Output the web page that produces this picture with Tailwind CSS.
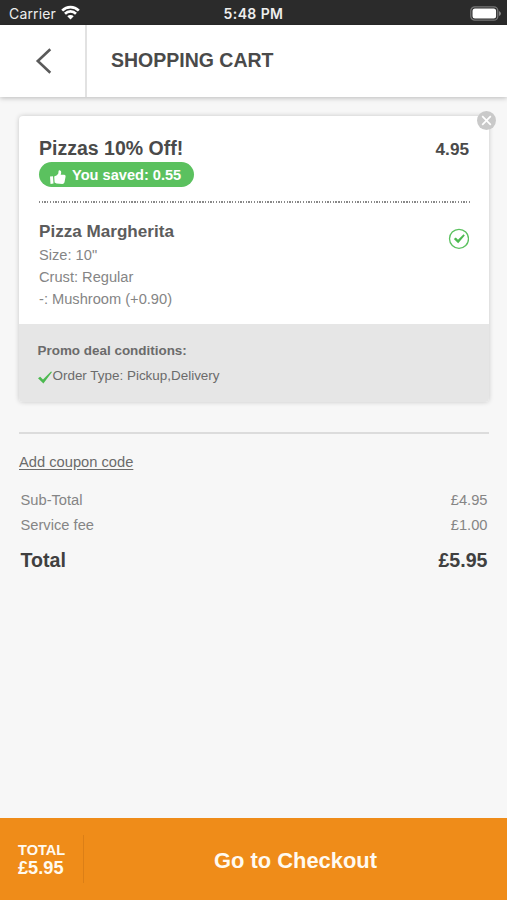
<!DOCTYPE html>
<html lang="en">
<head>
<meta charset="utf-8">
<title>Shopping Cart</title>
<script src="https://cdn.jsdelivr.net/npm/@tailwindcss/browser@4"></script>
</head>
<body class="bg-[#f7f7f7]">
<div class="flex h-[900px] w-[507px] flex-col overflow-hidden bg-[#f7f7f7] font-['Liberation_Sans',Arial,sans-serif] whitespace-nowrap text-[#4a4a4a]">
  <!-- Status bar -->
  <div class="grid h-[25px] shrink-0 grid-cols-3 items-center bg-[#2b2b2b] pt-[2px] font-[Inter,sans-serif] text-[#eeeeee]">
    <div class="flex items-center gap-[5px] pl-[9px]">
      <span class="text-[14px] leading-[20px] tracking-[0.15px]">Carrier</span>
      <svg class="mb-[2px] h-[15px] w-[19px]" viewBox="0 0 19 15" fill="none" stroke="#fff" stroke-width="2.700"><path d="M1.200 5.600a11.800 11.800 0 0 1 16.600 0"/><path d="M4 8.700a7.800 7.800 0 0 1 11 0"/><path d="M9.500 14.400L6.300 11.200a4.600 4.600 0 0 1 6.400 0z" fill="#fff" stroke="none"/></svg>
    </div>
    <div class="text-center text-[14px] leading-[20px] font-semibold tracking-[0.400px]">5:48 PM</div>
    <div class="flex justify-end pr-[6px]">
      <svg class="mb-px h-[15px] w-[31px]" viewBox="0 0 31 15"><rect x=".8" y=".8" width="27" height="13.400" rx="4" fill="none" stroke="#777" stroke-width="1.300"/><rect x="2.500" y="2.500" width="23.600" height="10" rx="2.500" fill="#fff"/><path d="M29 5v5q2-1 2-2.500T29 5z" fill="#888"/></svg>
    </div>
  </div>

  <!-- Header -->
  <header class="z-10 flex h-[72px] shrink-0 bg-white shadow-[0_1px_5px_rgba(0,0,0,0.25)]">
    <div class="flex w-[87px] items-center border-r-2 border-[#e2e2e2] pl-[35px]">
      <svg class="h-[26px] w-[17px]" viewBox="0 0 17 26" fill="none" stroke="#5a5a5a" stroke-width="2.600"><path d="M15.300 1.300L2.800 13L15.300 24.700"/></svg>
    </div>
    <h1 class="pl-[24px] text-[19.500px] leading-[70px] font-bold">SHOPPING CART</h1>
  </header>

  <main class="flex-1 px-[19px] pt-[19px]">
    <!-- Deal card -->
    <section class="relative h-[286px] w-[470px] rounded-[4px] bg-white shadow-[0_0_5px_rgba(0,0,0,0.2)]">
      <button class="absolute -top-[5px] -right-[7px] size-[19px] rounded-full bg-[#c9c9c9]" aria-label="Remove">
        <svg class="size-[19px]" viewBox="0 0 19 19" stroke="#fff" stroke-width="1.700"><path d="M5.200 5.200L13.800 13.800M13.800 5.200L5.200 13.800"/></svg>
      </button>
      <div class="h-[208px] px-[20px] pt-[20px]">
        <div class="flex h-[27px] justify-between font-bold">
          <h2 class="text-[19.500px] leading-[25px]">Pizzas 10% Off!</h2>
          <span class="text-[17.200px] leading-[26px]">4.95</span>
        </div>
        <div class="flex h-[25px] w-[155px] -translate-y-px items-center gap-[6px] rounded-full bg-[#5bc15f] pl-[11px] text-white">
          <svg class="mt-[4px] h-[14px] w-[16px]" viewBox="0 0 16 14" fill="#fff"><path d="M0 6.600L3 6.200L3.500 13.600L.5 14zM4.200 6.600Q7.500 5.300 8.300 3.500L8.600.8Q8.900 0 9.900.2Q11.500.8 11.200 2.800L10.700 4.800H14.200Q15.800 5 15.600 6.500L14.500 12.300Q14 14 12.400 14L6.500 13.600L4.600 12.600z"/></svg>
          <span class="text-[14.600px] leading-[24px] font-bold">You saved: 0.55</span>
        </div>
        <div class="mt-[13px] h-[2px] w-[431px] bg-[repeating-linear-gradient(90deg,#888_0px,#888_1.300px,transparent_1.300px,transparent_2.720px)]"></div>
        <div class="flex justify-between pt-[17px]">
          <div>
            <h3 class="text-[17.100px] leading-[24px] font-bold text-[#5c5c5c]">Pizza Margherita</h3>
            <div class="text-[14.650px] leading-[22px] text-[#858585]">
              <p>Size: 10"</p>
              <p>Crust: Regular</p>
              <p>-: Mushroom (+0.90)</p>
            </div>
          </div>
          <svg class="mt-[8px] size-[21px]" viewBox="0 0 21 21"><circle cx="11" cy="10.800" r="9.500" fill="none" stroke="#5bc15f" stroke-width="1.300"/><path d="M5.800 11L7.800 9.400L10 11.700L15.600 6.200L16.800 7.500L10.200 15.200z" fill="#4cb950"/></svg>
        </div>
      </div>
      <div class="h-[78px] rounded-b-[4px] bg-[#e6e6e6] pt-[15px] pl-[18.500px] text-[13.450px] text-[#6b6b6b]">
        <p class="leading-[24px] font-bold">Promo deal conditions:</p>
        <p class="flex items-center leading-[25px]">
          <svg class="mt-[4px] mr-[1px] h-[13px] w-[14px]" viewBox="0 0 14 13" fill="#4cb950"><path d="M0 7.200L2.200 5.800L5 8.500L13 .5L14 1L5.400 12.500z"/></svg><span>Order Type: Pickup,Delivery</span>
        </p>
      </div>
    </section>

    <!-- Totals -->
    <section class="mt-[30px] w-[470px] border-t-2 border-[#dcdcdc] pt-[17px] text-[14.700px]">
      <a class="block leading-[22px] text-[#6b6b6b] underline underline-offset-[1.500px]">Add coupon code</a>
      <div class="mt-[15px] flex flex-col pr-[1.500px] pl-[1.500px] leading-[24.500px] text-[#858585]">
        <div class="flex justify-between"><span>Sub-Total</span><span>£4.95</span></div>
        <div class="flex justify-between"><span>Service fee</span><span>£1.00</span></div>
        <div class="mt-[10px] flex justify-between text-[19.600px] leading-[26px] font-bold text-[#404040]"><span>Total</span><span>£5.95</span></div>
      </div>
    </section>
  </main>

  <!-- Checkout bar -->
  <footer class="flex h-[82px] shrink-0 items-center bg-[#ef8c19] font-bold text-[#fffaf0]">
    <div class="flex h-[48px] w-[84px] flex-col justify-center border-r border-[#dc7f16] pl-[18px]">
      <span class="text-[14.600px] leading-[18px]">TOTAL</span>
      <span class="text-[18.200px] leading-[19px]">£5.95</span>
    </div>
    <div class="flex-1 pt-[4px] text-center text-[21.900px] leading-[30px]">Go to Checkout</div>
  </footer>
</div>
</body>
</html>
